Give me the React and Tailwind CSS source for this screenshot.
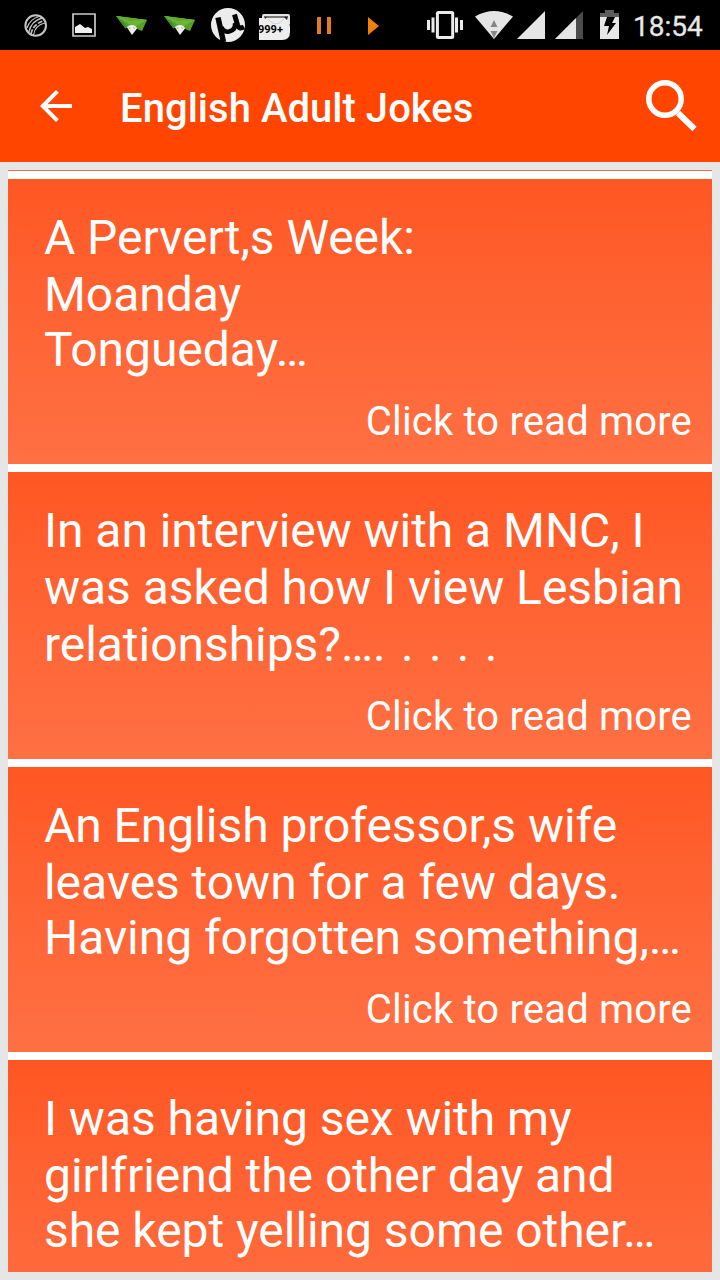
import React from "react";

function Plane({ className }) {
  return (
    <svg className={className} width="32" height="20" viewBox="0 0 32 20">
      <path d="M0 0L31 4L26 15L17 11L9 12Z" fill="#57a02a" />
      <path d="M0 0L31 4L18 11Z" fill="#6cb636" />
      <path d="M0 0L31 4L14 5Z" fill="#5eaa2d" />
      <path d="M0 0L10 8L10 13Z" fill="#4a8d24" />
      <path d="M11 11.500Q12 9 16 9Q20 9 21 12.500L16 19Z" fill="#eeeee8" />
      <path d="M12.500 12h2M17 12h2" stroke="#a5b59b" strokeWidth="1" />
    </svg>
  );
}

function StatusBar() {
  return (
    <div className="flex h-[50px] shrink-0 items-start bg-black">
      <svg className="mt-[14px] ml-[24px] shrink-0" width="24" height="24" viewBox="0 0 24 24" fill="none" stroke="#c4c4c4">
        <circle cx="11.7" cy="11.500" r="10.3" strokeWidth="2" />
        <path d="M3 14Q6 5 15 2.500M9.500 21Q11 11 21 9" strokeWidth="1.100" />
        <path d="M5 18Q7 7 18 4" strokeWidth="1.300" />
        <path d="M7 20Q8.500 10.500 20 6.500" strokeWidth="1.600" strokeDasharray="5 1.500" />
      </svg>
      <svg className="mt-[13px] ml-[24px] shrink-0" width="24" height="24" viewBox="0 0 24 24">
        <path d="M1 1h22v22H1Z" fill="none" stroke="#c9c9c9" strokeWidth="1.7" />
        <path d="M3 20v-6l5-3 5 4 3-1 4 2v4Z" fill="#f1f1f1" />
      </svg>
      <Plane className="mt-[16px] ml-[20px] shrink-0" />
      <Plane className="mt-[16px] ml-[16px] shrink-0" />
      <svg className="mt-[8px] ml-[15px] shrink-0" width="34" height="34" viewBox="0 0 34 34">
        <circle cx="17" cy="17" r="17" fill="#ececec" />
        <g fill="none" stroke="#000">
          <path d="M7 9.500L12.500 34" strokeWidth="5.500" />
          <path d="M10.500 19Q12.500 24.500 18 23.500Q25 22 24 15" strokeWidth="4.500" />
          <path d="M23.500 6.500L26.500 17Q28 21.500 33 19" strokeWidth="5" />
        </g>
      </svg>
      <div className="relative mt-[13px] ml-[14px] h-[28px] w-[32px] shrink-0">
        <svg width="32" height="28" viewBox="0 0 32 28">
          <path d="M3 3q0-2 2-2h24q2 0 2 2v8H3Z" fill="#e5e5e5" />
          <path d="M0 5h25q6 3 6 9v5q0 8-8 8H0Z" fill="#eeeeee" />
          <path d="M7 4h20" stroke="#333" strokeWidth="1.200" />
          <path d="M5 3l1 3 2-2ZM29 3l-1 4-3-3Z" fill="#222" />
          <path d="M9 6q4 5 8 5t8-5" stroke="#d2d2d2" fill="none" />
        </svg>
        <span className="absolute top-[10px] left-[-1px] text-[11px] leading-[13px] font-bold text-black">999+</span>
      </div>
      <svg className="mt-[17px] ml-[26px] shrink-0" width="14" height="17" viewBox="0 0 14 17">
        <path d="M0 0h4v17H0ZM10 0h4v17h-4Z" fill="#e27d1c" />
      </svg>
      <svg className="mt-[17px] ml-[37px] shrink-0" width="11" height="18" viewBox="0 0 11 18">
        <path d="M0 0L11 9L0 18Z" fill="#ef8010" />
      </svg>
      <svg className="mt-[11px] ml-[48px] shrink-0" width="36" height="28" viewBox="0 0 36 28">
        <rect x="10.4" y="1.5" width="15.3" height="25" rx="1" fill="none" stroke="#ebebeb" strokeWidth="3" />
        <path d="M0 9h3v10H0ZM4.5 6.500h3v15h-3ZM28 6.500h3v15h-3ZM33 9h3v10h-3Z" fill="#ebebeb" />
      </svg>
      <svg className="mt-[11px] ml-[12px] shrink-0" width="38" height="28" viewBox="0 0 38 28">
        <path d="M0 5.500Q19-5.500 38 5.500L19 28Z" fill="#e5e5e5" />
        <path d="M15.500 16L19 9L22.500 16ZM15.500 20h7L19 27Z" fill="#858585" />
      </svg>
      <svg className="mt-[11px] ml-[4px] shrink-0" width="28" height="28" viewBox="0 0 28 28">
        <path d="M28 0V28H0Z" fill="#e5e5e5" />
      </svg>
      <svg className="mt-[11px] ml-[10px] shrink-0" width="28" height="28" viewBox="0 0 28 28">
        <path d="M28 0V28H0Z" fill="#4b4b4b" />
        <path d="M21 7V28H0Z" fill="#e5e5e5" />
      </svg>
      <svg className="mt-[10px] ml-[17px] shrink-0" width="19" height="29" viewBox="0 0 19 29">
        <path d="M5 0h9v3h5v5H0V3h5Z" fill="#5d5d5d" />
        <path d="M0 7h19v22H0Z" fill="#e7e7e7" />
        <path d="M7 7h8l-3 6h4L7 25l2-9H4Z" fill="#000" />
      </svg>
      <span className="mt-[9px] ml-[14px] text-[28px] leading-[36px] text-[#e8e8e8] [-webkit-text-stroke:0.3px_#e8e8e8]">18:54</span>
    </div>
  );
}

function Header() {
  return (
    <header className="flex h-[112px] shrink-0 items-start bg-[#ff4500] text-white">
      <svg className="mt-[40px] ml-[40px] shrink-0" width="32" height="32" viewBox="0 0 32 32" fill="none" stroke="#fff" strokeWidth="4">
        <path d="M32 16H4M17.400 1.400L2.800 16L17.400 30.600" />
      </svg>
      <h1 className="mt-[35px] ml-[48px] flex-1 text-[40px] leading-[48px] font-medium tracking-[0.03px] whitespace-nowrap">English Adult Jokes</h1>
      <svg className="mt-[30px] mr-[22px] shrink-0" width="52" height="52" viewBox="0 0 52 52" fill="none" stroke="#fff">
        <circle cx="19" cy="19" r="16.200" strokeWidth="5.500" />
        <path d="M32 33L48.500 49" strokeWidth="6" />
      </svg>
    </header>
  );
}

const compact = { card: "h-[285px]", rows: "grid-rows-[57px_55px_56px]", link: "mt-[20px]" };
const roomy = { card: "h-[287px]", rows: "grid-rows-[57px_57px_57px]", link: "mt-[19px]" };

const jokes = [
  { layout: compact, more: true, lines: ["A Pervert,s Week:", "Moanday", "Tongueday…"] },
  {
    layout: roomy,
    more: true,
    lines: [
      "In an interview with a MNC, I",
      "was asked how I view Lesbian",
      <span className="[word-spacing:3.5px]">relationships?…. . . . .</span>,
    ],
  },
  { layout: compact, more: true, lines: ["An English professor,s wife", "leaves town for a few days.", "Having forgotten something,…"] },
  { layout: compact, more: false, lines: ["I was having sex with my", "girlfriend the other day and", "she kept yelling some other…"] },
];

function JokeCard({ joke }) {
  const { layout, lines, more } = joke;
  return (
    <article className={`flex shrink-0 flex-col bg-linear-to-b from-[#ff5722] to-[#ff7043] pt-[31px] pr-[20px] pl-[36px] text-white ${layout.card}`}>
      <div className={`grid text-[48px] leading-[56px] tracking-[-0.05px] ${layout.rows}`}>
        {lines.map((line, index) => (
          <p key={index} className="whitespace-nowrap">{line}</p>
        ))}
      </div>
      {more && (
        <button className={`self-end text-[40px] leading-[48px] tracking-[0.18px] whitespace-nowrap ${layout.link}`}>Click to read more</button>
      )}
    </article>
  );
}

export default function App() {
  return (
    <div className="flex h-[1280px] w-[720px] flex-col overflow-hidden bg-[#e6e6e6] font-['Roboto',sans-serif]">
      <StatusBar />
      <Header />
      <main className="m-2 flex min-h-0 flex-1 flex-col gap-2 overflow-hidden bg-white">
        <div className="h-px shrink-0 bg-[#e8704f]" />
        {jokes.map((joke, index) => (
          <JokeCard key={index} joke={joke} />
        ))}
      </main>
    </div>
  );
}
